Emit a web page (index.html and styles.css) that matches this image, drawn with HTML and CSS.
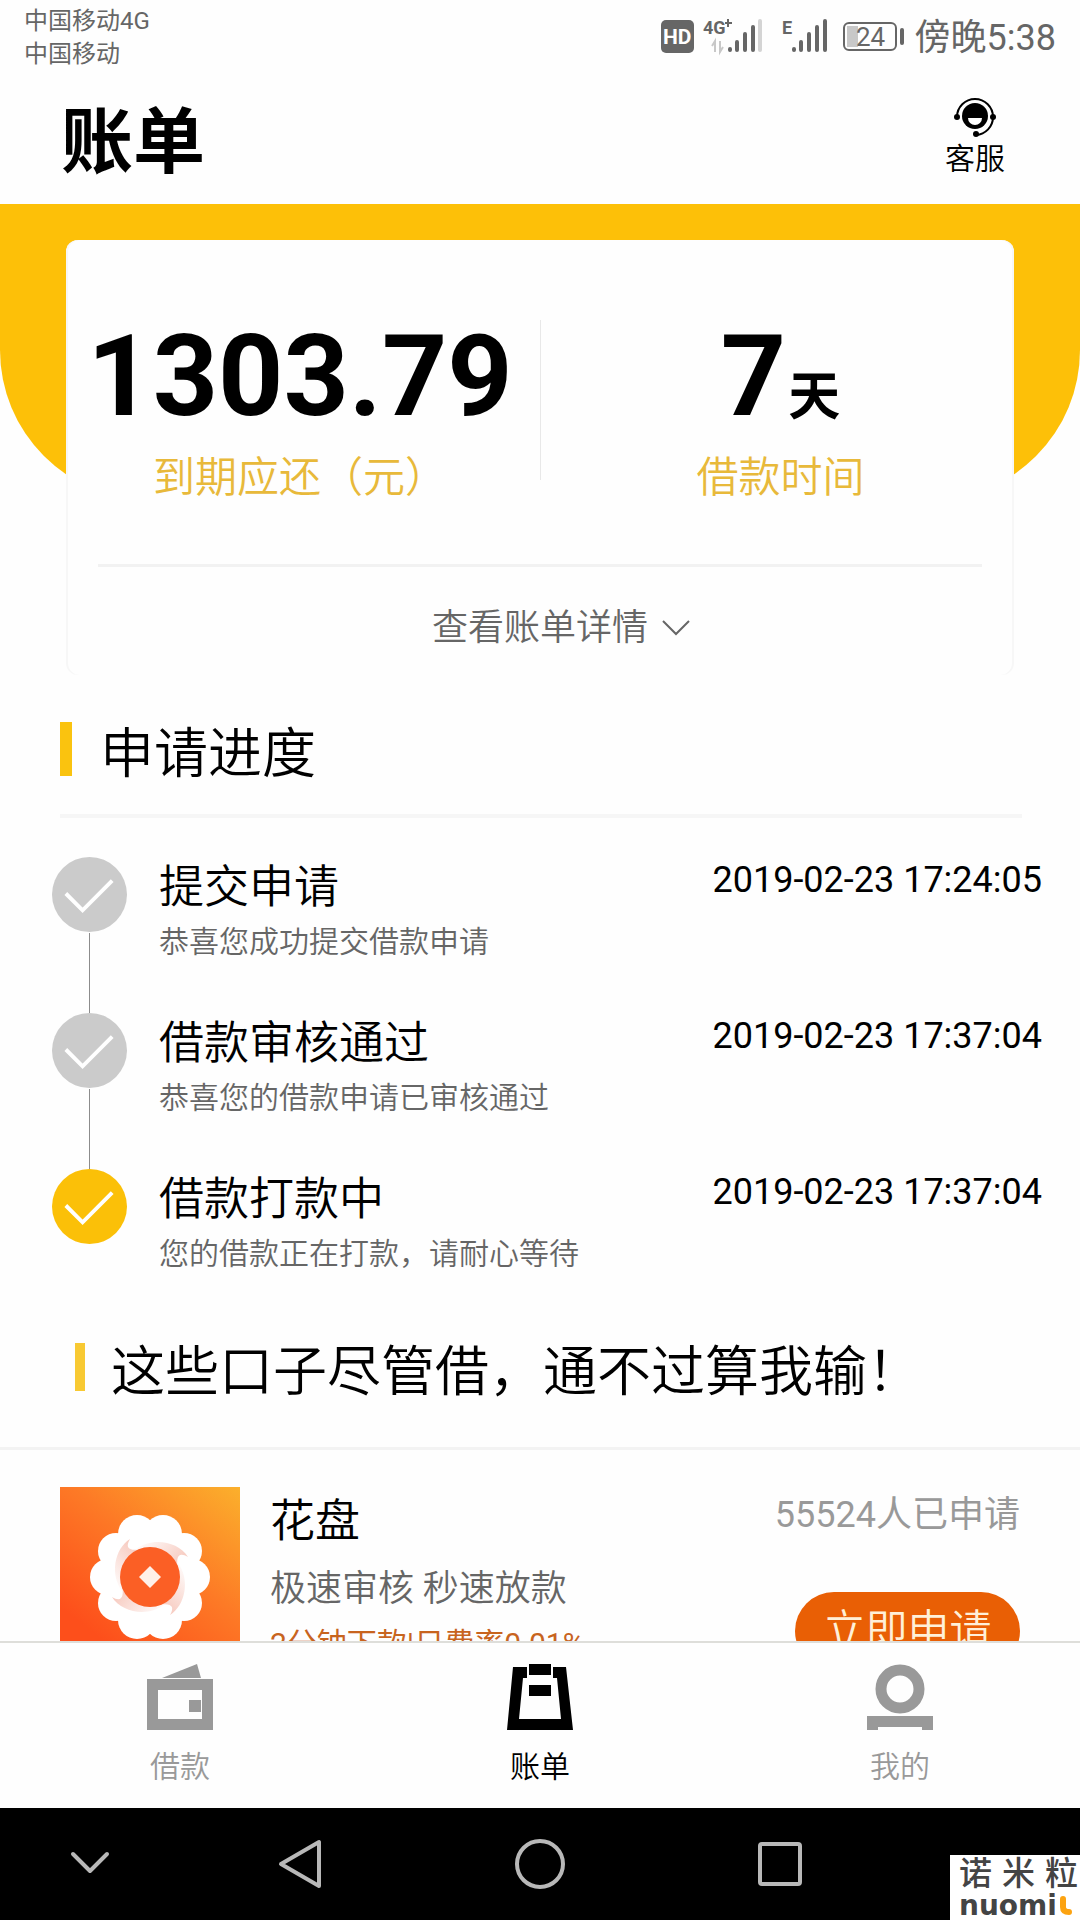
FILE: index.html
```html
<!DOCTYPE html>
<html lang="zh-CN">
<head>
<meta charset="utf-8">
<meta name="viewport" content="width=device-width, initial-scale=1">
<title>账单</title>
<link rel="stylesheet" href="styles.css">
</head>
<body>
<div class="status">
  <div class="carriers"><span>中国移动4G</span><span>中国移动</span></div>
  <div class="status-right">
    <svg class="status-icons" width="246" height="40" viewBox="0 0 246 40" aria-hidden="true">
      <rect x="1" y="3" width="33" height="33" rx="5" fill="#666"/>
      <text class="hd-text" x="3" y="27">HD</text>
      <text class="net-text" x="43" y="17">4G</text>
      <path d="M65 6h7M68 2v8" stroke="#666" stroke-width="2"/>
      <path d="M55 35V24l-3 5M60 24v11l3-5" fill="none" stroke="#c8c8c8" stroke-width="2"/>
      <g stroke="#666" stroke-width="4" stroke-linecap="round">
        <path d="M70 32v1M77 25v8M85 17v16M93 10v23M134 32v1M141 25v8M149 17v16M157 10v23M165 4v29"/>
        <path d="M100 4v29" stroke="#d4d4d4"/>
      </g>
      <text class="net-text" x="122" y="17">E</text>
      <rect x="184" y="6" width="52" height="27" rx="5" fill="none" stroke="#666" stroke-width="2"/>
      <rect x="187" y="9" width="11" height="21" fill="#c8c8c8"/>
      <path d="M242 13v13" stroke="#666" stroke-width="4" stroke-linecap="round"/>
      <text class="battery-text" x="196" y="29">24</text>
    </svg>
    <span class="clock">傍晚5:38</span>
  </div>
</div>

<header class="header">
  <h1>账单</h1>
  <button class="service" type="button">
    <svg width="42" height="42" viewBox="0 0 42 42" aria-hidden="true">
      <circle cx="21" cy="19" r="13"/>
      <path d="M14 21h14a7 7 0 0 1-14 0z" fill="#fff"/>
      <path d="M3 20a18 18 0 0 1 36 0a18 18 0 0 1-17 18" fill="none" stroke="#000" stroke-width="2"/>
      <circle cx="3" cy="20" r="3"/><circle cx="39" cy="20" r="3"/><circle cx="22" cy="37" r="3"/>
    </svg>
    <span>客服</span>
  </button>
</header>

<main class="content">
  <section class="hero">
    <div class="card">
      <div class="metrics">
        <div class="metric"><p class="value">1303.79</p><p class="label">到期应还（元）</p></div>
        <div class="metric"><p class="value">7<small>天</small></p><p class="label">借款时间</p></div>
      </div>
      <button class="details" type="button">查看账单详情
        <svg width="28" height="18" viewBox="0 0 28 18" aria-hidden="true"><path d="M1 2l13 13L27 2" fill="none" stroke="#666" stroke-width="2"/></svg>
      </button>
    </div>
  </section>

  <section class="progress">
    <h2 class="heading">申请进度</h2>
    <ol class="steps">
      <li class="step">
        <svg class="dot" viewBox="0 0 76 76" aria-hidden="true"><circle cx="38" cy="38" r="38"/><path d="M14 37l17 17L61 24"/></svg>
        <div class="step-text"><h3>提交申请</h3><p>恭喜您成功提交借款申请</p></div>
        <time>2019-02-23 17:24:05</time>
      </li>
      <li class="step">
        <svg class="dot" viewBox="0 0 76 76" aria-hidden="true"><circle cx="38" cy="38" r="38"/><path d="M14 37l17 17L61 24"/></svg>
        <div class="step-text"><h3>借款审核通过</h3><p>恭喜您的借款申请已审核通过</p></div>
        <time>2019-02-23 17:37:04</time>
      </li>
      <li class="step active">
        <svg class="dot" viewBox="0 0 76 76" aria-hidden="true"><circle cx="38" cy="38" r="38"/><path d="M14 37l17 17L61 24"/></svg>
        <div class="step-text"><h3>借款打款中</h3><p>您的借款正在打款，请耐心等待</p></div>
        <time>2019-02-23 17:37:04</time>
      </li>
    </ol>
  </section>

  <section class="offers">
    <h2 class="heading heading-small">这些口子尽管借，通不过算我输！</h2>
    <article class="offer">
      <svg class="logo" viewBox="0 0 180 180" aria-hidden="true">
        <defs>
          <linearGradient id="sky" x1="1" y1="0" x2="0.3" y2="0.9"><stop offset="0" stop-color="#fbb02c"/><stop offset="0.5" stop-color="#fd7a26"/><stop offset="1" stop-color="#fd4f1b"/></linearGradient>
          <linearGradient id="swirl" x1="0" y1="1" x2="0.6" y2="0"><stop offset="0" stop-color="#fff"/><stop offset="1" stop-color="#f6c5b9"/></linearGradient>
        </defs>
        <rect width="180" height="180" fill="url(#sky)"/>
        <g fill="#fff">
          <circle cx="90" cy="90" r="50"/>
          <circle cx="132" cy="90" r="18"/><circle cx="124" cy="116" r="18"/><circle cx="103" cy="133" r="19"/><circle cx="77" cy="133" r="19"/><circle cx="56" cy="116" r="18"/>
          <circle cx="48" cy="90" r="18"/><circle cx="56" cy="64" r="18"/><circle cx="77" cy="47" r="19"/><circle cx="103" cy="47" r="19"/><circle cx="124" cy="64" r="18"/>
        </g>
        <g fill="url(#swirl)">
          <path d="M62 104C50 88 54 62 70 52C64 62 70 66 90 60z"/>
          <path d="M62 104C50 88 54 62 70 52C64 62 70 66 90 60z" transform="rotate(90 90 90)"/>
          <path d="M62 104C50 88 54 62 70 52C64 62 70 66 90 60z" transform="rotate(180 90 90)"/>
          <path d="M62 104C50 88 54 62 70 52C64 62 70 66 90 60z" transform="rotate(270 90 90)"/>
        </g>
        <circle cx="90" cy="90" r="30" fill="#fb5f25"/>
        <path d="M90 79l11 11-11 11-11-11z" fill="#fff0e9"/>
      </svg>
      <div class="offer-text">
        <h3>花盘</h3>
        <p class="offer-desc">极速审核 秒速放款</p>
        <p class="offer-rate">2分钟下款|日费率0.01%</p>
      </div>
      <div class="offer-side">
        <p class="applied">55524人已申请</p>
        <button class="apply" type="button">立即申请</button>
      </div>
    </article>
  </section>
</main>

<nav class="tabs">
  <a class="tab" href="#loan">
    <svg width="66" height="66" viewBox="0 0 66 66" aria-hidden="true"><path d="M15 14L50 0l4 14z"/><path fill-rule="evenodd" d="M0 15h66v51H0zM11 26v29h44V26z"/><path d="M42 36h12v12H42z"/></svg>
    <span>借款</span>
  </a>
  <a class="tab current" href="#bill" aria-current="page">
    <svg width="66" height="66" viewBox="0 0 66 66" aria-hidden="true"><path d="M6 3h14v11h-4l-4 41h42l-4-41h-4V3h13l7 63H0z"/><path d="M22 0h22v11H22zM22 21h22v11H22z"/></svg>
    <span>账单</span>
  </a>
  <a class="tab" href="#me">
    <svg width="66" height="66" viewBox="0 0 66 66" aria-hidden="true"><circle cx="33" cy="25" r="19" fill="none" stroke="currentColor" stroke-width="11"/><path d="M0 52h66v14H55v-3H11v3H0z"/></svg>
    <span>我的</span>
  </a>
</nav>

<div class="system">
  <button type="button" aria-label="收起"><svg width="50" height="50" viewBox="0 0 50 50"><path d="M8 15l17 17 17-17"/></svg></button>
  <button type="button" aria-label="返回"><svg width="50" height="50" viewBox="0 0 50 50"><path d="M6 25L44 3v44z"/></svg></button>
  <button type="button" aria-label="主页"><svg width="50" height="50" viewBox="0 0 50 50"><circle cx="25" cy="25" r="23"/></svg></button>
  <button type="button" aria-label="最近任务"><svg width="50" height="50" viewBox="0 0 50 50"><rect x="5" y="5" width="40" height="40" rx="2"/></svg></button>
  <div class="brand">
    <p class="brand-cn"><span>诺</span><span>米</span><span>粒</span></p>
    <p class="brand-en">nuomi<svg width="16" height="20" viewBox="0 0 16 20" aria-hidden="true"><path d="M6 3v8q0 5 6 5" fill="none" stroke="#fca311" stroke-width="6" stroke-linecap="round"/></svg></p>
  </div>
</div>
</body>
</html>
```

FILE: styles.css
```css
* { box-sizing: border-box; margin: 0; padding: 0; }

body {
  display: flex;
  flex-direction: column;
  height: 100vh;
  background: #fefefe;
  color: #000;
  font-family: Roboto, "Noto Sans CJK SC", sans-serif;
  font-weight: 350;
}

button { border: 0; background: none; color: inherit; font: inherit; cursor: pointer; }
a { color: inherit; text-decoration: none; }
h1, h2, h3 { font-weight: inherit; }
svg { display: block; flex: none; }

.status {
  display: flex;
  justify-content: space-between;
  padding: 5px 24px 0;
  height: 72px;
  color: #666;
  font-weight: 400;
}
.carriers { display: flex; flex-direction: column; font-size: 24px; line-height: 33px; }
.status-right { display: flex; align-items: flex-start; gap: 9px; padding-top: 12px; }
.clock { font-size: 36px; line-height: 42px; }
.hd-text { font: 700 21px Roboto, sans-serif; fill: #fff; }
.net-text { font: 700 18px Roboto, sans-serif; fill: #666; }
.battery-text { font: 400 26px Roboto, sans-serif; fill: #666; }

.header {
  display: flex;
  justify-content: space-between;
  align-items: center;
  height: 132px;
  padding: 0 75px 0 61px;
}
.header h1 { padding-top: 10px; font-size: 72px; line-height: 122px; font-weight: 700; }
.service { display: flex; flex-direction: column; align-items: center; font-size: 30px; line-height: 40px; }

.content { flex: 1; min-height: 0; overflow: hidden; }

.hero { position: relative; padding: 36px 66px 0; }
.hero::before {
  content: "";
  position: absolute;
  inset: 0 0 auto;
  height: 296px;
  background: #fdc008;
  border-radius: 0 0 150px 150px;
}
.card {
  position: relative;
  background: #fefefe;
  border-radius: 12px;
  box-shadow: inset 2px 0 #f7f7f7, inset -2px 0 #f7f7f7;
}
.metrics {
  display: grid;
  grid-template-columns: 1fr 1fr;
  margin: 0 -6px;
  padding: 80px 0 84px;
}
.metric { text-align: center; height: 160px; }
.metric + .metric { border-left: 1px solid #e8e8e8; }
.value { padding-top: 2px; font-size: 114px; line-height: 108px; font-weight: 700; white-space: nowrap; }
.value small { font-size: 52px; line-height: 54px; margin-left: 2px; }
.label { padding-top: 24px; font-size: 42px; line-height: 48px; color: #e8b93a; }
.details {
  display: flex;
  justify-content: center;
  align-items: center;
  gap: 14px;
  width: calc(100% - 64px);
  margin: 0 32px;
  padding: 36px 0 22px 42px;
  border-top: 3px solid #f2f2f2;
  font-size: 36px;
  line-height: 50px;
  color: #666;
}

.heading {
  display: grid;
  grid-template-columns: auto 1fr;
  align-items: start;
  gap: 28px;
  font-size: 54px;
  line-height: 66px;
}
.heading::before { content: ""; width: 12px; height: 54px; background: #fac30f; }
.heading-small::before { width: 10px; height: 48px; background: #f8c932; }

.progress { padding: 47px 38px 0 52px; }
.progress .heading { margin: 0 20px 0 8px; padding-bottom: 26px; border-bottom: 4px solid #f6f6f6; }
.steps { list-style: none; padding-top: 39px; }
.step { display: flex; position: relative; height: 156px; }
.step + .step::before {
  content: "";
  position: absolute;
  left: 37px;
  bottom: 100%;
  width: 1px;
  height: 80px;
  background: #8c8c8c;
}
.dot { width: 75px; height: 75px; fill: #cbcbcb; }
.dot path { fill: none; stroke: #fff; stroke-width: 4; }
.active .dot { fill: #fbc008; }
.step-text { flex: 1; padding: 4px 0 0 32px; }
.step-text h3 { font-size: 45px; line-height: 54px; }
.step-text p { padding-top: 6px; font-size: 30px; line-height: 42px; color: #666; }
.step time { padding-top: 1px; font-size: 36px; line-height: 44px; font-weight: 400; }

.offers .heading { gap: 26px; padding: 18px 0 44px 75px; line-height: 60px; border-bottom: 3px solid #f3f3f3; }
.offer { display: flex; padding: 37px 60px 36px; }
.logo { width: 180px; height: 180px; }
.offer-text { flex: 1; padding: 8px 0 0 30px; }
.offer-text h3 { font-size: 45px; line-height: 54px; }
.offer-desc { padding-top: 16px; font-size: 36px; line-height: 48px; color: #666; }
.offer-rate { padding-top: 10px; font-size: 30px; line-height: 42px; font-weight: 400; color: #c8641e; }
.offer-side { display: flex; flex-direction: column; align-items: flex-end; padding-top: 4px; }
.applied { font-size: 36px; line-height: 48px; font-weight: 400; color: #999; }
.apply {
  width: 225px;
  height: 78px;
  margin-top: 53px;
  border-radius: 39px;
  background: #e95f05;
  color: #fff0d8;
  font-size: 42px;
  line-height: 78px;
}

.tabs {
  display: grid;
  grid-template-columns: repeat(3, 1fr);
  border-top: 2px solid #dededa;
  padding: 21px 0 20px;
  background: #fefefe;
}
.tab { display: flex; flex-direction: column; align-items: center; gap: 16px; font-size: 30px; line-height: 42px; color: #999; fill: currentColor; }
.current { color: #000; }

.system {
  display: grid;
  grid-template-columns: 3fr 4fr 4fr 4fr 3fr;
  position: relative;
  height: 112px;
  background: #000;
}
.system button { display: grid; place-items: center; }
.system button svg { fill: none; stroke: #b8b8b8; stroke-width: 4; stroke-linejoin: round; stroke-linecap: round; }
.brand { position: absolute; right: 0; bottom: 0; width: 130px; height: 65px; padding-left: 9px; background: #fff; color: #444; overflow: hidden; }
.brand-cn { display: flex; gap: 10px; font-size: 33px; line-height: 38px; font-weight: 500; }
.brand-en { display: flex; align-items: center; font: 700 28px/26px "DejaVu Sans", sans-serif; }
```
